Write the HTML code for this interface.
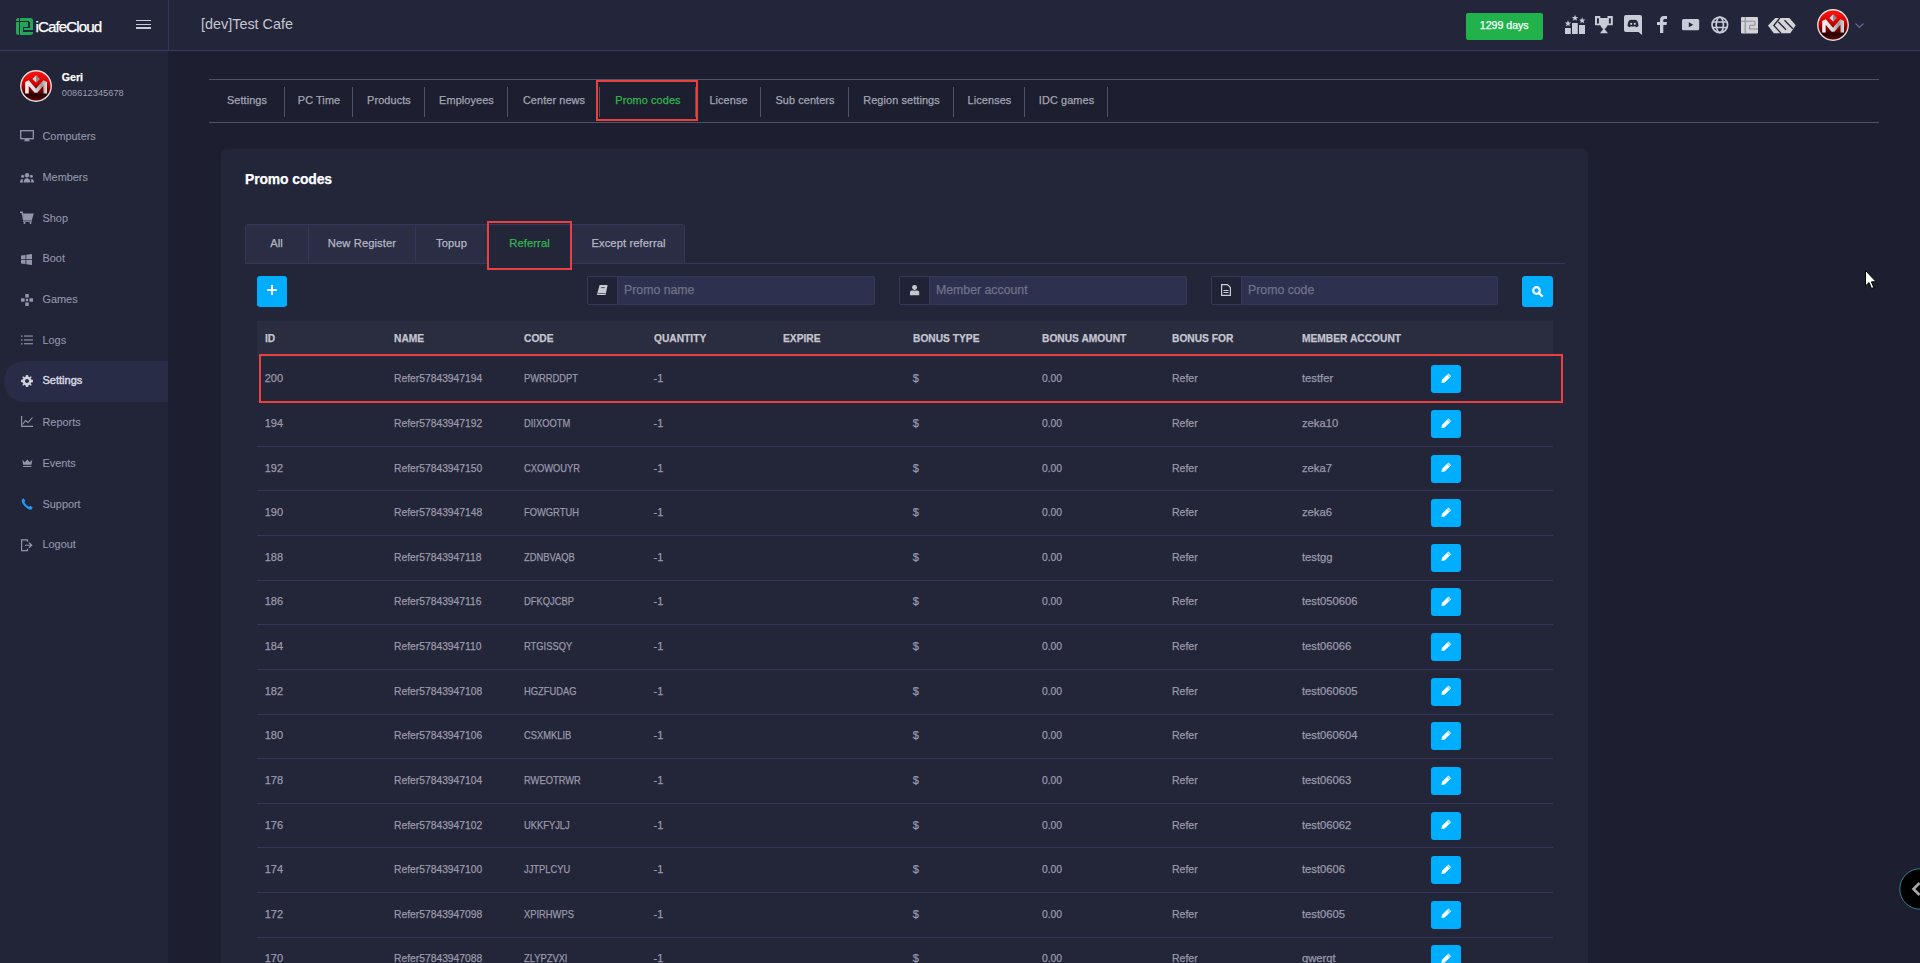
<!DOCTYPE html><html><head><meta charset="utf-8"><style>
html,body{margin:0;padding:0;width:1920px;height:963px;overflow:hidden;background:#1d1e2f;font-family:"Liberation Sans", sans-serif;}
.t{position:absolute;white-space:nowrap;line-height:1;-webkit-text-stroke:0.25px currentColor;}
.r{position:absolute;}
svg{position:absolute;overflow:visible;}
</style></head><body>
<div class="r" style="left:0px;top:0px;width:168px;height:963px;background:#222538;"></div>
<div class="r" style="left:0px;top:0px;width:1920px;height:50px;background:#23253a;"></div>
<div class="r" style="left:0px;top:50px;width:1920px;height:1px;background:#3a3a62;"></div>
<div class="r" style="left:168px;top:0px;width:1px;height:50px;background:#33345a;"></div>
<div class="r" style="left:16px;top:18px;width:17px;height:17px;background:#1fa855;border-radius:2.5px;"></div>
<div class="r" style="left:18.7px;top:18px;width:1.1px;height:17px;background:#23253a;"></div>
<div class="r" style="left:16px;top:21.3px;width:2.7px;height:1.2px;background:#23253a;"></div>
<div class="r" style="left:19.8px;top:21.4px;width:9.5px;height:1.0px;background:#23253a;"></div>
<div class="r" style="left:28.3px;top:22px;width:1.6px;height:5.2px;background:#23253a;"></div>
<div class="r" style="left:23.2px;top:27px;width:6.7px;height:1.1px;background:#23253a;"></div>
<div class="r" style="left:22.9px;top:27px;width:1.2px;height:4.4px;background:#23253a;"></div>
<div class="r" style="left:22.9px;top:30.3px;width:10.1px;height:1.4px;background:#23253a;"></div>
<div class="t" style="left:35.5px;top:19.13px;font-size:15.2px;color:#ffffff;font-weight:400;letter-spacing:-0.95px;">iCafeCloud</div>
<div class="r" style="left:136.3px;top:19.8px;width:14.6px;height:1.5px;background:#c9cbd3;"></div>
<div class="r" style="left:136.3px;top:23.5px;width:14.6px;height:1.5px;background:#c9cbd3;"></div>
<div class="r" style="left:136.3px;top:27.3px;width:14.6px;height:1.5px;background:#c9cbd3;"></div>
<div class="t" style="left:201px;top:17.01px;font-size:14.4px;color:#c6c7d0;font-weight:400;-webkit-text-stroke:0;">[dev]Test Cafe</div>
<div class="r" style="left:1466px;top:13px;width:77px;height:27px;background:#22b24c;border-radius:2px;"></div>
<div class="t" style="left:1304.2px;width:400px;text-align:center;top:20.03px;font-size:10.6px;color:#ffffff;font-weight:400;">1299 days</div>
<svg style="left:1565px;top:15px" width="20" height="19" viewBox="0 0 20 19">
<rect x="0" y="13" width="5.8" height="6" fill="#c8cbd8"/><rect x="7" y="8" width="5.8" height="11" fill="#c8cbd8"/><rect x="14" y="10" width="6" height="9" fill="#c8cbd8"/>
<path d="M3.00 5.30 L3.87 7.40 L6.14 7.58 L4.41 9.06 L4.94 11.27 L3.00 10.08 L1.06 11.27 L1.59 9.06 L-0.14 7.58 L2.13 7.40Z M10.00 -0.20 L10.87 1.90 L13.14 2.08 L11.41 3.56 L11.94 5.77 L10.00 4.58 L8.06 5.77 L8.59 3.56 L6.86 2.08 L9.13 1.90Z M17.20 2.30 L18.07 4.40 L20.34 4.58 L18.61 6.06 L19.14 8.27 L17.20 7.08 L15.26 8.27 L15.79 6.06 L14.06 4.58 L16.33 4.40Z" fill="#c8cbd8"/></svg>
<svg style="left:1595.2px;top:15.8px" width="18" height="17.4" viewBox="0 0 18 17.4">
<path d="M0 0 H5.3 V2.1 H12.5 V0 H17.8 V8.4 Q17.8 9.3 16.9 9.3 H12.6 Q11.5 12 9.5 13.1 L13 17.2 H5 L8.3 13.1 Q6.3 12 5.2 9.3 H0.9 Q0 9.3 0 8.4Z M2 2.2 V7.6 H3.9 V2.2Z M13.9 2.2 V7.6 H15.8 V2.2Z" fill="#c8cbd8" fill-rule="evenodd"/></svg>
<svg style="left:1624px;top:15px" width="18" height="20" viewBox="0 0 18 20">
<path d="M2 0 H16 Q18 0 18 2 V20 L14.5 17 H2 Q0 17 0 15 V2 Q0 0 2 0Z" fill="#c8cbd8"/>
<path d="M5 5.5 Q7 4.5 9 5 Q11 4.5 13 5.5 Q14.5 8 14.5 11 Q13.5 12 12 12.3 L11.3 11.2 Q9 11.8 6.7 11.2 L6 12.3 Q4.5 12 3.5 11 Q3.5 8 5 5.5Z" fill="#23253a"/>
<circle cx="7.2" cy="8.8" r="1.1" fill="#c8cbd8"/><circle cx="10.8" cy="8.8" r="1.1" fill="#c8cbd8"/></svg>
<svg style="left:1657px;top:16px" width="10" height="17" viewBox="0 0 10 17">
<path d="M3 17 V9 H0 V6 H3 V4 Q3 0 7 0 H10 V3 H7.5 Q6.3 3 6.3 4.2 V6 H10 L9.5 9 H6.3 V17Z" fill="#c8cbd8"/></svg>
<svg style="left:1682.4px;top:18.7px" width="17.2" height="11.3" viewBox="0 0 17.2 11.3">
<rect x="0" y="0" width="17.2" height="11.3" rx="1.6" fill="#c8cbd8"/><path d="M6.8 3.3 L11.3 5.75 L6.8 8.2Z" fill="#23253a"/></svg>
<svg style="left:1711px;top:15.5px" width="18" height="18" viewBox="0 0 18 18">
<g fill="none" stroke="#c8cbd8" stroke-width="1.7"><circle cx="8.8" cy="8.85" r="7.8"/><ellipse cx="8.8" cy="8.85" rx="3.6" ry="7.8"/><path d="M1.5 6 H16.1 M1.5 11.5 H16.1"/></g></svg>
<svg style="left:1740.5px;top:16.5px" width="17" height="16.5" viewBox="0 0 17 16.5">
<rect x="0" y="0" width="17" height="16.5" rx="1.2" fill="#d4d4d8"/>
<g fill="none" stroke="#8a8c98" stroke-width="1.1"><path d="M4.2 0 V16.5 M0 4.3 H13.2 Q14 4.3 14 5.3 V7.2 Q14 8.2 13 8.2 H9.5 Q8.6 8.2 8.6 9.2 V12 H17"/></g></svg>
<svg style="left:1768px;top:17.8px" width="28" height="15.4" viewBox="0 0 28 15.4">
<path d="M7.3 0 H21.4 L27.7 7.2 L22.3 15.2 H5.8 L0 7.6Z" fill="#d4d4d8"/>
<g fill="none" stroke="#23253a" stroke-width="1.3"><path d="M11.8 0 L5.8 7.5 L13.2 15.4 M10.2 3.8 L18 11.7 M16.5 2.2 L24.8 10.7"/></g></svg>
<svg style="left:1817px;top:9px" width="32" height="32" viewBox="0 0 32 32">
<defs><linearGradient id="lg1817" x1="0" y1="0" x2="0" y2="1"><stop offset="0" stop-color="#ff1414"/><stop offset="0.4" stop-color="#d80000"/><stop offset="0.65" stop-color="#7a0000"/><stop offset="0.8" stop-color="#240000"/><stop offset="1" stop-color="#6a0606"/></linearGradient>
<linearGradient id="mg1817" x1="0" y1="0" x2="1" y2="0"><stop offset="0" stop-color="#f4f4f4"/><stop offset="0.5" stop-color="#d8d8d8"/><stop offset="0.75" stop-color="#9a9a9a"/><stop offset="1" stop-color="#e0e0e0"/></linearGradient></defs>
<circle cx="16" cy="16" r="15.2" fill="url(#lg1817)" stroke="#e6dede" stroke-width="1.4"/>
<path d="M5.2 23.5 L5.2 12 L8.8 10.3 L16 18.8 L23.2 10.3 L27 12 L27 23.5 L23.5 23.5 L23.4 15.8 L17.4 22.8 L14.6 22.8 L8.7 15.8 L8.7 23.5Z" fill="url(#mg1817)"/>
<path d="M16 5.3 L19.6 8.9 L16 12.6 L12.4 8.9Z" fill="#d4d4d4"/><path d="M16 5.3 L19.6 8.9 L16 12.6Z" fill="#8c8c8c"/></svg>
<svg style="left:1855px;top:22.5px" width="9" height="5" viewBox="0 0 9 5"><path d="M0.5 0.5 L4.5 4.3 L8.5 0.5" fill="none" stroke="#5e6b95" stroke-width="1.2"/></svg>
<svg style="left:20px;top:70px" width="32" height="32" viewBox="0 0 32 32">
<defs><linearGradient id="lg20" x1="0" y1="0" x2="0" y2="1"><stop offset="0" stop-color="#ff1414"/><stop offset="0.4" stop-color="#d80000"/><stop offset="0.65" stop-color="#7a0000"/><stop offset="0.8" stop-color="#240000"/><stop offset="1" stop-color="#6a0606"/></linearGradient>
<linearGradient id="mg20" x1="0" y1="0" x2="1" y2="0"><stop offset="0" stop-color="#f4f4f4"/><stop offset="0.5" stop-color="#d8d8d8"/><stop offset="0.75" stop-color="#9a9a9a"/><stop offset="1" stop-color="#e0e0e0"/></linearGradient></defs>
<circle cx="16" cy="16" r="15.2" fill="url(#lg20)" stroke="#e6dede" stroke-width="1.4"/>
<path d="M5.2 23.5 L5.2 12 L8.8 10.3 L16 18.8 L23.2 10.3 L27 12 L27 23.5 L23.5 23.5 L23.4 15.8 L17.4 22.8 L14.6 22.8 L8.7 15.8 L8.7 23.5Z" fill="url(#mg20)"/>
<path d="M16 5.3 L19.6 8.9 L16 12.6 L12.4 8.9Z" fill="#d4d4d4"/><path d="M16 5.3 L19.6 8.9 L16 12.6Z" fill="#8c8c8c"/></svg>
<div class="t" style="left:61.8px;top:71.83px;font-size:10.6px;color:#ffffff;font-weight:700;">Geri</div>
<div class="t" style="left:61.8px;top:89.21px;font-size:9.2px;color:#9a9fb2;font-weight:400;letter-spacing:0.05px;-webkit-text-stroke:0;">008612345678</div>
<div class="r" style="left:4px;top:361px;width:164px;height:41px;background:#292c47;border-radius:20px 0 0 20px;"></div>
<div class="t" style="left:42.5px;top:130.57px;font-size:10.9px;color:#9297ad;font-weight:400;-webkit-text-stroke:0.1px currentColor;">Computers</div>
<div class="t" style="left:42.5px;top:171.57px;font-size:10.9px;color:#9297ad;font-weight:400;-webkit-text-stroke:0.1px currentColor;">Members</div>
<div class="t" style="left:42.5px;top:212.57px;font-size:10.9px;color:#9297ad;font-weight:400;-webkit-text-stroke:0.1px currentColor;">Shop</div>
<div class="t" style="left:42.5px;top:253.37px;font-size:10.9px;color:#9297ad;font-weight:400;-webkit-text-stroke:0.1px currentColor;">Boot</div>
<div class="t" style="left:42.5px;top:294.27px;font-size:10.9px;color:#9297ad;font-weight:400;-webkit-text-stroke:0.1px currentColor;">Games</div>
<div class="t" style="left:42.5px;top:335.27px;font-size:10.9px;color:#9297ad;font-weight:400;-webkit-text-stroke:0.1px currentColor;">Logs</div>
<div class="t" style="left:42.5px;top:375.09px;font-size:11px;color:#d4d6e0;font-weight:400;-webkit-text-stroke:0.45px currentColor;">Settings</div>
<div class="t" style="left:42.5px;top:416.77px;font-size:10.9px;color:#9297ad;font-weight:400;-webkit-text-stroke:0.1px currentColor;">Reports</div>
<div class="t" style="left:42.5px;top:457.57px;font-size:10.9px;color:#9297ad;font-weight:400;-webkit-text-stroke:0.1px currentColor;">Events</div>
<div class="t" style="left:42.5px;top:498.57px;font-size:10.9px;color:#9297ad;font-weight:400;-webkit-text-stroke:0.1px currentColor;">Support</div>
<div class="t" style="left:42.5px;top:539.37px;font-size:10.9px;color:#9297ad;font-weight:400;-webkit-text-stroke:0.1px currentColor;">Logout</div>
<svg style="left:20px;top:130px" width="14" height="12" viewBox="0 0 14 12"><rect x="0.7" y="0.7" width="12.6" height="8" fill="none" stroke="#9297ad" stroke-width="1.3"/><path d="M5 9 H9 L9.8 11.2 H4.2Z" fill="#9297ad"/></svg>\n<svg style="left:20px;top:172.5px" width="14" height="9.5" viewBox="0 0 14 9.5"><circle cx="7" cy="2.3" r="2.2" fill="#9297ad"/><circle cx="2.6" cy="3.3" r="1.5" fill="#9297ad"/><circle cx="11.4" cy="3.3" r="1.5" fill="#9297ad"/><path d="M3.5 9.5 Q3.8 5.5 7 5.3 Q10.2 5.5 10.5 9.5Z M0 9.5 Q0 6.3 2.6 6 Q3 6.5 2.8 9.5Z M14 9.5 Q14 6.3 11.4 6 Q11 6.5 11.2 9.5Z" fill="#9297ad"/></svg>\n<svg style="left:20px;top:212px" width="13" height="12" viewBox="0 0 13 12"><path d="M0 0.3 H2.2 L3.6 7.5 H11.3 L12.8 2.3 H3.3" fill="none" stroke="#9297ad" stroke-width="1.4"/><path d="M3.3 2.3 H12.8 L11.3 7.5 H3.6Z" fill="#9297ad"/><rect x="3" y="8.6" width="9" height="1.2" fill="#9297ad"/><circle cx="4.5" cy="11" r="1" fill="#9297ad"/><circle cx="10.5" cy="11" r="1" fill="#9297ad"/></svg>\n<svg style="left:21px;top:254px" width="11" height="11" viewBox="0 0 11 11"><path d="M0 1.6 L4.5 0.9 V5 H0Z M5.3 0.8 L11 0 V5 H5.3Z M0 5.8 H4.5 V10 L0 9.4Z M5.3 5.8 H11 V11 L5.3 10.2Z" fill="#9297ad"/></svg>\n<svg style="left:21px;top:294px" width="12" height="12" viewBox="0 0 12 12"><rect x="4.3" y="0" width="3.4" height="3.6" fill="#9297ad"/><rect x="4.3" y="8.4" width="3.4" height="3.6" fill="#9297ad"/><rect x="0" y="4.3" width="3.6" height="3.4" fill="#9297ad"/><rect x="8.4" y="4.3" width="3.6" height="3.4" fill="#9297ad"/><rect x="4.8" y="4.8" width="2.4" height="2.4" fill="#9297ad"/></svg>\n<svg style="left:21px;top:335px" width="12" height="10" viewBox="0 0 12 10"><g fill="#9297ad"><rect x="0" y="0.5" width="1.5" height="1.3"/><rect x="3" y="0.5" width="9" height="1.1"/><rect x="0" y="4.4" width="1.5" height="1.3"/><rect x="3" y="4.4" width="9" height="1.1"/><rect x="0" y="8.2" width="1.5" height="1.3"/><rect x="3" y="8.2" width="9" height="1.1"/></g></svg>\n<svg style="left:20.5px;top:375px" width="12" height="12" viewBox="0 0 12 12"><path d="M6 0 L7.2 0.2 L7.5 1.8 L8.6 2.3 L9.9 1.3 L10.7 2.1 L9.7 3.4 L10.2 4.5 L11.8 4.8 L12 6 L11.8 7.2 L10.2 7.5 L9.7 8.6 L10.7 9.9 L9.9 10.7 L8.6 9.7 L7.5 10.2 L7.2 11.8 L6 12 L4.8 11.8 L4.5 10.2 L3.4 9.7 L2.1 10.7 L1.3 9.9 L2.3 8.6 L1.8 7.5 L0.2 7.2 L0 6 L0.2 4.8 L1.8 4.5 L2.3 3.4 L1.3 2.1 L2.1 1.3 L3.4 2.3 L4.5 1.8 L4.8 0.2Z M6 4 A2 2 0 1 0 6.01 4Z" fill="#cfd1dd" fill-rule="evenodd"/></svg>\n<svg style="left:21px;top:416.3px" width="12" height="11" viewBox="0 0 12 11"><path d="M0.6 0 V10.4 H12" fill="none" stroke="#9297ad" stroke-width="1.1"/><path d="M1.5 8.5 L4.5 4.5 L7 6.5 L11.5 1.5" fill="none" stroke="#9297ad" stroke-width="1.1"/></svg>\n<svg style="left:21.8px;top:459px" width="10.6" height="8.3" viewBox="0 0 12 10"><path d="M0 1 L3 4 L6 0.5 L9 4 L12 1 L11 7 H1Z" fill="#9297ad"/><rect x="1" y="8.3" width="10" height="1.3" fill="#9297ad"/></svg>\n<svg style="left:21px;top:497.6px" width="12" height="12" viewBox="0 0 12 12"><path d="M2.5 0.3 L4.3 2.8 L3.3 4.3 Q4.5 6.8 7.7 8.7 L9.2 7.7 L11.7 9.5 L10.5 11.5 Q8 12.2 4.5 9 Q0.6 5.3 0.6 2 Z" fill="#19a0f5"/></svg>\n<svg style="left:21px;top:538.5px" width="12" height="12.5" viewBox="0 0 12 12"><path d="M6.5 2.5 V0.6 H0.6 V11.4 H6.5 V9.5" fill="none" stroke="#9297ad" stroke-width="1.2"/><path d="M4 6 H10.5 M8 3.5 L10.7 6 L8 8.5" fill="none" stroke="#9297ad" stroke-width="1.2"/></svg>\n<div class="r" style="left:209px;top:79px;width:1670px;height:1px;background:#505366;"></div>
<div class="r" style="left:209px;top:122px;width:1670px;height:1px;background:#505366;"></div>
<div class="r" style="left:284px;top:87px;width:1px;height:30px;background:#505366;"></div>
<div class="t" style="left:47.0px;width:400px;text-align:center;top:95.27px;font-size:10.9px;color:#a2a5b4;font-weight:400;letter-spacing:0.1px;">Settings</div>
<div class="r" style="left:352px;top:87px;width:1px;height:30px;background:#505366;"></div>
<div class="t" style="left:119.0px;width:400px;text-align:center;top:95.27px;font-size:10.9px;color:#a2a5b4;font-weight:400;letter-spacing:0.1px;">PC Time</div>
<div class="r" style="left:424px;top:87px;width:1px;height:30px;background:#505366;"></div>
<div class="t" style="left:189.0px;width:400px;text-align:center;top:95.27px;font-size:10.9px;color:#a2a5b4;font-weight:400;letter-spacing:0.1px;">Products</div>
<div class="r" style="left:507px;top:87px;width:1px;height:30px;background:#505366;"></div>
<div class="t" style="left:266.5px;width:400px;text-align:center;top:95.27px;font-size:10.9px;color:#a2a5b4;font-weight:400;letter-spacing:0.1px;">Employees</div>
<div class="r" style="left:599px;top:87px;width:1px;height:30px;background:#505366;"></div>
<div class="t" style="left:354.0px;width:400px;text-align:center;top:95.27px;font-size:10.9px;color:#a2a5b4;font-weight:400;letter-spacing:0.1px;">Center news</div>
<div class="r" style="left:695px;top:87px;width:1px;height:30px;background:#505366;"></div>
<div class="t" style="left:448.0px;width:400px;text-align:center;top:95.27px;font-size:10.9px;color:#2fb64e;font-weight:400;letter-spacing:0.1px;">Promo codes</div>
<div class="r" style="left:760px;top:87px;width:1px;height:30px;background:#505366;"></div>
<div class="t" style="left:528.5px;width:400px;text-align:center;top:95.27px;font-size:10.9px;color:#a2a5b4;font-weight:400;letter-spacing:0.1px;">License</div>
<div class="r" style="left:848px;top:87px;width:1px;height:30px;background:#505366;"></div>
<div class="t" style="left:605.0px;width:400px;text-align:center;top:95.27px;font-size:10.9px;color:#a2a5b4;font-weight:400;letter-spacing:0.1px;">Sub centers</div>
<div class="r" style="left:953px;top:87px;width:1px;height:30px;background:#505366;"></div>
<div class="t" style="left:701.5px;width:400px;text-align:center;top:95.27px;font-size:10.9px;color:#a2a5b4;font-weight:400;letter-spacing:0.1px;">Region settings</div>
<div class="r" style="left:1024px;top:87px;width:1px;height:30px;background:#505366;"></div>
<div class="t" style="left:789.5px;width:400px;text-align:center;top:95.27px;font-size:10.9px;color:#a2a5b4;font-weight:400;letter-spacing:0.1px;">Licenses</div>
<div class="r" style="left:1107px;top:87px;width:1px;height:30px;background:#505366;"></div>
<div class="t" style="left:866.5px;width:400px;text-align:center;top:95.27px;font-size:10.9px;color:#a2a5b4;font-weight:400;letter-spacing:0.1px;">IDC games</div>
<div class="r" style="left:596px;top:80px;width:102px;height:41px;background:transparent;box-sizing:border-box;border:2px solid #e8413f;"></div>
<div class="r" style="left:221px;top:149px;width:1367px;height:900px;background:#232539;border-radius:5px;"></div>
<div class="t" style="left:245px;top:173.23px;font-size:13.9px;color:#ffffff;font-weight:700;letter-spacing:-0.1px;">Promo codes</div>
<div class="r" style="left:685px;top:263px;width:880px;height:1px;background:#34375a;"></div>
<div class="r" style="left:245px;top:224px;width:440px;height:40px;background:#2a2d43;box-sizing:border-box;border:1px solid #34375a;border-radius:3px 3px 0 0;"></div>
<div class="r" style="left:308px;top:224px;width:1px;height:40px;background:#34375a;"></div>
<div class="r" style="left:415px;top:224px;width:1px;height:40px;background:#34375a;"></div>
<div class="r" style="left:487px;top:224px;width:1px;height:40px;background:#34375a;"></div>
<div class="r" style="left:571px;top:224px;width:1px;height:40px;background:#34375a;"></div>
<div class="r" style="left:488px;top:225px;width:83px;height:39px;background:#232539;"></div>
<div class="t" style="left:76.5px;width:400px;text-align:center;top:238.02px;font-size:11.2px;color:#b5b7c3;font-weight:400;letter-spacing:0.1px;">All</div>
<div class="t" style="left:162.0px;width:400px;text-align:center;top:238.02px;font-size:11.2px;color:#b5b7c3;font-weight:400;letter-spacing:0.1px;">New Register</div>
<div class="t" style="left:251.5px;width:400px;text-align:center;top:238.02px;font-size:11.2px;color:#b5b7c3;font-weight:400;letter-spacing:0.1px;">Topup</div>
<div class="t" style="left:329.5px;width:400px;text-align:center;top:238.02px;font-size:11.2px;color:#2fb64e;font-weight:400;letter-spacing:0.1px;">Referral</div>
<div class="t" style="left:428.5px;width:400px;text-align:center;top:238.02px;font-size:11.2px;color:#b5b7c3;font-weight:400;letter-spacing:0.1px;">Except referral</div>
<div class="r" style="left:487px;top:221px;width:85px;height:49px;background:transparent;box-sizing:border-box;border:2px solid #e8413f;"></div>
<div class="r" style="left:257px;top:276px;width:30px;height:31px;background:#00aeff;border-radius:3px;"></div>
<div class="r" style="left:267px;top:289.3px;width:10px;height:1.7px;background:#ffffff;"></div>
<div class="r" style="left:271.15px;top:285px;width:1.7px;height:10px;background:#ffffff;"></div>
<div class="r" style="left:587px;top:276px;width:288px;height:29px;background:#2e3050;box-sizing:border-box;border:1px solid #34375a;border-radius:2px;"></div>
<div class="r" style="left:587px;top:276px;width:31px;height:29px;background:#202236;box-sizing:border-box;border:1px solid #34375a;border-radius:2px 0 0 2px;"></div>
<div class="t" style="left:624px;top:284.09px;font-size:12.3px;color:#6f7186;font-weight:400;">Promo name</div>
<svg style="left:597.3px;top:285px" width="11" height="10" viewBox="0 0 11 10"><path d="M2.6 0 H10.6 L8.6 10 H0.6 Q-0.2 10 0.1 9 Z" fill="#c9cbd3"/><rect x="4.2" y="2.2" width="3.6" height="0.9" fill="#3a3c50"/><path d="M1 8.3 H8.6 L8.45 9 H0.85Z" fill="#3a3c50"/></svg>
<div class="r" style="left:899px;top:276px;width:288px;height:29px;background:#2e3050;box-sizing:border-box;border:1px solid #34375a;border-radius:2px;"></div>
<div class="r" style="left:899px;top:276px;width:31px;height:29px;background:#202236;box-sizing:border-box;border:1px solid #34375a;border-radius:2px 0 0 2px;"></div>
<div class="t" style="left:936px;top:284.09px;font-size:12.3px;color:#6f7186;font-weight:400;">Member account</div>
<svg style="left:909.8px;top:284.8px" width="9.2" height="10.2" viewBox="0 0 9.2 10.2"><circle cx="4.6" cy="2.5" r="2.5" fill="#c4c6ce"/><path d="M0 10.2 V7 Q0 5.4 1.6 5.4 H7.6 Q9.2 5.4 9.2 7 V10.2Z" fill="#c4c6ce"/></svg>
<div class="r" style="left:1211px;top:276px;width:287px;height:29px;background:#2e3050;box-sizing:border-box;border:1px solid #34375a;border-radius:2px;"></div>
<div class="r" style="left:1211px;top:276px;width:31px;height:29px;background:#202236;box-sizing:border-box;border:1px solid #34375a;border-radius:2px 0 0 2px;"></div>
<div class="t" style="left:1248px;top:284.09px;font-size:12.3px;color:#6f7186;font-weight:400;">Promo code</div>
<svg style="left:1221px;top:283.5px" width="10" height="12" viewBox="0 0 10 12"><path d="M0.6 0.6 H6.5 L9.4 3.5 V11.4 H0.6Z" fill="none" stroke="#c9cbd3" stroke-width="1.2"/><rect x="2.5" y="6" width="5" height="1" fill="#c9cbd3"/><rect x="2.5" y="8" width="5" height="1" fill="#c9cbd3"/></svg>
<div class="r" style="left:1522px;top:276px;width:31px;height:31px;background:#00aeff;border-radius:3px;"></div>
<svg style="left:1532px;top:286px" width="11" height="11" viewBox="0 0 11 11"><circle cx="4.5" cy="4.5" r="3.3" fill="none" stroke="#fff" stroke-width="2.2"/><path d="M6.8 6.8 L10 10" stroke="#fff" stroke-width="2.4" stroke-linecap="round"/></svg>
<div class="r" style="left:257px;top:321px;width:1296px;height:36px;background:#2a2c40;"></div>
<div class="t" style="left:264.7px;top:333.49px;font-size:11px;color:#c4c5ce;font-weight:700;transform:scaleX(0.93);transform-origin:0 0;">ID</div>
<div class="t" style="left:394.29999999999995px;top:333.49px;font-size:11px;color:#c4c5ce;font-weight:700;transform:scaleX(0.93);transform-origin:0 0;">NAME</div>
<div class="t" style="left:523.9px;top:333.49px;font-size:11px;color:#c4c5ce;font-weight:700;transform:scaleX(0.93);transform-origin:0 0;">CODE</div>
<div class="t" style="left:653.5px;top:333.49px;font-size:11px;color:#c4c5ce;font-weight:700;transform:scaleX(0.93);transform-origin:0 0;">QUANTITY</div>
<div class="t" style="left:783.0999999999999px;top:333.49px;font-size:11px;color:#c4c5ce;font-weight:700;transform:scaleX(0.93);transform-origin:0 0;">EXPIRE</div>
<div class="t" style="left:912.7px;top:333.49px;font-size:11px;color:#c4c5ce;font-weight:700;transform:scaleX(0.93);transform-origin:0 0;">BONUS TYPE</div>
<div class="t" style="left:1042.3px;top:333.49px;font-size:11px;color:#c4c5ce;font-weight:700;transform:scaleX(0.93);transform-origin:0 0;">BONUS AMOUNT</div>
<div class="t" style="left:1171.8999999999999px;top:333.49px;font-size:11px;color:#c4c5ce;font-weight:700;transform:scaleX(0.93);transform-origin:0 0;">BONUS FOR</div>
<div class="t" style="left:1301.5px;top:333.49px;font-size:11px;color:#c4c5ce;font-weight:700;transform:scaleX(0.93);transform-origin:0 0;">MEMBER ACCOUNT</div>
<div class="t" style="left:264.7px;top:373.29px;font-size:11px;color:#9a99aa;font-weight:400;transform:scaleX(1.0);transform-origin:0 0;">200</div>
<div class="t" style="left:394.29999999999995px;top:373.29px;font-size:11px;color:#9a99aa;font-weight:400;transform:scaleX(0.937);transform-origin:0 0;">Refer57843947194</div>
<div class="t" style="left:523.9px;top:373.29px;font-size:11px;color:#9a99aa;font-weight:400;transform:scaleX(0.85);transform-origin:0 0;">PWRRDDPT</div>
<div class="t" style="left:653.5px;top:373.29px;font-size:11px;color:#9a99aa;font-weight:400;transform:scaleX(1.0);transform-origin:0 0;">-1</div>
<div class="t" style="left:912.7px;top:373.29px;font-size:11px;color:#9a99aa;font-weight:400;transform:scaleX(1.0);transform-origin:0 0;">$</div>
<div class="t" style="left:1042.3px;top:373.29px;font-size:11px;color:#9a99aa;font-weight:400;transform:scaleX(0.94);transform-origin:0 0;">0.00</div>
<div class="t" style="left:1171.8999999999999px;top:373.29px;font-size:11px;color:#9a99aa;font-weight:400;transform:scaleX(0.955);transform-origin:0 0;">Refer</div>
<div class="t" style="left:1301.5px;top:373.29px;font-size:11px;color:#9a99aa;font-weight:400;transform:scaleX(1.02);transform-origin:0 0;">testfer</div>
<div class="r" style="left:1431px;top:365.3px;width:30px;height:28px;background:#00aeff;border-radius:3px;"></div>
<svg style="left:1441px;top:372.90000000000003px" width="10.5" height="10.5" viewBox="0 0 10 10"><path d="M7 0.4 L9.6 3 L3.6 9 L0.4 9.6 L1 6.4Z" fill="#fff"/><path d="M5.9 1.5 L8.5 4.1" stroke="#00aeff" stroke-width="0.8"/></svg>
<div class="r" style="left:257px;top:401.12px;width:1296px;height:1px;background:#34355a;"></div>
<div class="t" style="left:264.7px;top:417.92px;font-size:11px;color:#9a99aa;font-weight:400;transform:scaleX(1.0);transform-origin:0 0;">194</div>
<div class="t" style="left:394.29999999999995px;top:417.92px;font-size:11px;color:#9a99aa;font-weight:400;transform:scaleX(0.937);transform-origin:0 0;">Refer57843947192</div>
<div class="t" style="left:523.9px;top:417.92px;font-size:11px;color:#9a99aa;font-weight:400;transform:scaleX(0.85);transform-origin:0 0;">DIIXOOTM</div>
<div class="t" style="left:653.5px;top:417.92px;font-size:11px;color:#9a99aa;font-weight:400;transform:scaleX(1.0);transform-origin:0 0;">-1</div>
<div class="t" style="left:912.7px;top:417.92px;font-size:11px;color:#9a99aa;font-weight:400;transform:scaleX(1.0);transform-origin:0 0;">$</div>
<div class="t" style="left:1042.3px;top:417.92px;font-size:11px;color:#9a99aa;font-weight:400;transform:scaleX(0.94);transform-origin:0 0;">0.00</div>
<div class="t" style="left:1171.8999999999999px;top:417.92px;font-size:11px;color:#9a99aa;font-weight:400;transform:scaleX(0.955);transform-origin:0 0;">Refer</div>
<div class="t" style="left:1301.5px;top:417.92px;font-size:11px;color:#9a99aa;font-weight:400;transform:scaleX(1.02);transform-origin:0 0;">zeka10</div>
<div class="r" style="left:1431px;top:409.93px;width:30px;height:28px;background:#00aeff;border-radius:3px;"></div>
<svg style="left:1441px;top:417.53000000000003px" width="10.5" height="10.5" viewBox="0 0 10 10"><path d="M7 0.4 L9.6 3 L3.6 9 L0.4 9.6 L1 6.4Z" fill="#fff"/><path d="M5.9 1.5 L8.5 4.1" stroke="#00aeff" stroke-width="0.8"/></svg>
<div class="r" style="left:257px;top:445.75px;width:1296px;height:1px;background:#34355a;"></div>
<div class="t" style="left:264.7px;top:462.54px;font-size:11px;color:#9a99aa;font-weight:400;transform:scaleX(1.0);transform-origin:0 0;">192</div>
<div class="t" style="left:394.29999999999995px;top:462.54px;font-size:11px;color:#9a99aa;font-weight:400;transform:scaleX(0.937);transform-origin:0 0;">Refer57843947150</div>
<div class="t" style="left:523.9px;top:462.54px;font-size:11px;color:#9a99aa;font-weight:400;transform:scaleX(0.85);transform-origin:0 0;">CXOWOUYR</div>
<div class="t" style="left:653.5px;top:462.54px;font-size:11px;color:#9a99aa;font-weight:400;transform:scaleX(1.0);transform-origin:0 0;">-1</div>
<div class="t" style="left:912.7px;top:462.54px;font-size:11px;color:#9a99aa;font-weight:400;transform:scaleX(1.0);transform-origin:0 0;">$</div>
<div class="t" style="left:1042.3px;top:462.54px;font-size:11px;color:#9a99aa;font-weight:400;transform:scaleX(0.94);transform-origin:0 0;">0.00</div>
<div class="t" style="left:1171.8999999999999px;top:462.54px;font-size:11px;color:#9a99aa;font-weight:400;transform:scaleX(0.955);transform-origin:0 0;">Refer</div>
<div class="t" style="left:1301.5px;top:462.54px;font-size:11px;color:#9a99aa;font-weight:400;transform:scaleX(1.02);transform-origin:0 0;">zeka7</div>
<div class="r" style="left:1431px;top:454.55px;width:30px;height:28px;background:#00aeff;border-radius:3px;"></div>
<svg style="left:1441px;top:462.15000000000003px" width="10.5" height="10.5" viewBox="0 0 10 10"><path d="M7 0.4 L9.6 3 L3.6 9 L0.4 9.6 L1 6.4Z" fill="#fff"/><path d="M5.9 1.5 L8.5 4.1" stroke="#00aeff" stroke-width="0.8"/></svg>
<div class="r" style="left:257px;top:490.38px;width:1296px;height:1px;background:#34355a;"></div>
<div class="t" style="left:264.7px;top:507.17px;font-size:11px;color:#9a99aa;font-weight:400;transform:scaleX(1.0);transform-origin:0 0;">190</div>
<div class="t" style="left:394.29999999999995px;top:507.17px;font-size:11px;color:#9a99aa;font-weight:400;transform:scaleX(0.937);transform-origin:0 0;">Refer57843947148</div>
<div class="t" style="left:523.9px;top:507.17px;font-size:11px;color:#9a99aa;font-weight:400;transform:scaleX(0.85);transform-origin:0 0;">FOWGRTUH</div>
<div class="t" style="left:653.5px;top:507.17px;font-size:11px;color:#9a99aa;font-weight:400;transform:scaleX(1.0);transform-origin:0 0;">-1</div>
<div class="t" style="left:912.7px;top:507.17px;font-size:11px;color:#9a99aa;font-weight:400;transform:scaleX(1.0);transform-origin:0 0;">$</div>
<div class="t" style="left:1042.3px;top:507.17px;font-size:11px;color:#9a99aa;font-weight:400;transform:scaleX(0.94);transform-origin:0 0;">0.00</div>
<div class="t" style="left:1171.8999999999999px;top:507.17px;font-size:11px;color:#9a99aa;font-weight:400;transform:scaleX(0.955);transform-origin:0 0;">Refer</div>
<div class="t" style="left:1301.5px;top:507.17px;font-size:11px;color:#9a99aa;font-weight:400;transform:scaleX(1.02);transform-origin:0 0;">zeka6</div>
<div class="r" style="left:1431px;top:499.18px;width:30px;height:28px;background:#00aeff;border-radius:3px;"></div>
<svg style="left:1441px;top:506.78000000000003px" width="10.5" height="10.5" viewBox="0 0 10 10"><path d="M7 0.4 L9.6 3 L3.6 9 L0.4 9.6 L1 6.4Z" fill="#fff"/><path d="M5.9 1.5 L8.5 4.1" stroke="#00aeff" stroke-width="0.8"/></svg>
<div class="r" style="left:257px;top:535.0px;width:1296px;height:1px;background:#34355a;"></div>
<div class="t" style="left:264.7px;top:551.79px;font-size:11px;color:#9a99aa;font-weight:400;transform:scaleX(1.0);transform-origin:0 0;">188</div>
<div class="t" style="left:394.29999999999995px;top:551.79px;font-size:11px;color:#9a99aa;font-weight:400;transform:scaleX(0.937);transform-origin:0 0;">Refer57843947118</div>
<div class="t" style="left:523.9px;top:551.79px;font-size:11px;color:#9a99aa;font-weight:400;transform:scaleX(0.85);transform-origin:0 0;">ZDNBVAQB</div>
<div class="t" style="left:653.5px;top:551.79px;font-size:11px;color:#9a99aa;font-weight:400;transform:scaleX(1.0);transform-origin:0 0;">-1</div>
<div class="t" style="left:912.7px;top:551.79px;font-size:11px;color:#9a99aa;font-weight:400;transform:scaleX(1.0);transform-origin:0 0;">$</div>
<div class="t" style="left:1042.3px;top:551.79px;font-size:11px;color:#9a99aa;font-weight:400;transform:scaleX(0.94);transform-origin:0 0;">0.00</div>
<div class="t" style="left:1171.8999999999999px;top:551.79px;font-size:11px;color:#9a99aa;font-weight:400;transform:scaleX(0.955);transform-origin:0 0;">Refer</div>
<div class="t" style="left:1301.5px;top:551.79px;font-size:11px;color:#9a99aa;font-weight:400;transform:scaleX(1.02);transform-origin:0 0;">testgg</div>
<div class="r" style="left:1431px;top:543.8px;width:30px;height:28px;background:#00aeff;border-radius:3px;"></div>
<svg style="left:1441px;top:551.4px" width="10.5" height="10.5" viewBox="0 0 10 10"><path d="M7 0.4 L9.6 3 L3.6 9 L0.4 9.6 L1 6.4Z" fill="#fff"/><path d="M5.9 1.5 L8.5 4.1" stroke="#00aeff" stroke-width="0.8"/></svg>
<div class="r" style="left:257px;top:579.62px;width:1296px;height:1px;background:#34355a;"></div>
<div class="t" style="left:264.7px;top:596.42px;font-size:11px;color:#9a99aa;font-weight:400;transform:scaleX(1.0);transform-origin:0 0;">186</div>
<div class="t" style="left:394.29999999999995px;top:596.42px;font-size:11px;color:#9a99aa;font-weight:400;transform:scaleX(0.937);transform-origin:0 0;">Refer57843947116</div>
<div class="t" style="left:523.9px;top:596.42px;font-size:11px;color:#9a99aa;font-weight:400;transform:scaleX(0.85);transform-origin:0 0;">DFKQJCBP</div>
<div class="t" style="left:653.5px;top:596.42px;font-size:11px;color:#9a99aa;font-weight:400;transform:scaleX(1.0);transform-origin:0 0;">-1</div>
<div class="t" style="left:912.7px;top:596.42px;font-size:11px;color:#9a99aa;font-weight:400;transform:scaleX(1.0);transform-origin:0 0;">$</div>
<div class="t" style="left:1042.3px;top:596.42px;font-size:11px;color:#9a99aa;font-weight:400;transform:scaleX(0.94);transform-origin:0 0;">0.00</div>
<div class="t" style="left:1171.8999999999999px;top:596.42px;font-size:11px;color:#9a99aa;font-weight:400;transform:scaleX(0.955);transform-origin:0 0;">Refer</div>
<div class="t" style="left:1301.5px;top:596.42px;font-size:11px;color:#9a99aa;font-weight:400;transform:scaleX(1.02);transform-origin:0 0;">test050606</div>
<div class="r" style="left:1431px;top:588.42px;width:30px;height:28px;background:#00aeff;border-radius:3px;"></div>
<svg style="left:1441px;top:596.02px" width="10.5" height="10.5" viewBox="0 0 10 10"><path d="M7 0.4 L9.6 3 L3.6 9 L0.4 9.6 L1 6.4Z" fill="#fff"/><path d="M5.9 1.5 L8.5 4.1" stroke="#00aeff" stroke-width="0.8"/></svg>
<div class="r" style="left:257px;top:624.25px;width:1296px;height:1px;background:#34355a;"></div>
<div class="t" style="left:264.7px;top:641.04px;font-size:11px;color:#9a99aa;font-weight:400;transform:scaleX(1.0);transform-origin:0 0;">184</div>
<div class="t" style="left:394.29999999999995px;top:641.04px;font-size:11px;color:#9a99aa;font-weight:400;transform:scaleX(0.937);transform-origin:0 0;">Refer57843947110</div>
<div class="t" style="left:523.9px;top:641.04px;font-size:11px;color:#9a99aa;font-weight:400;transform:scaleX(0.85);transform-origin:0 0;">RTGISSQY</div>
<div class="t" style="left:653.5px;top:641.04px;font-size:11px;color:#9a99aa;font-weight:400;transform:scaleX(1.0);transform-origin:0 0;">-1</div>
<div class="t" style="left:912.7px;top:641.04px;font-size:11px;color:#9a99aa;font-weight:400;transform:scaleX(1.0);transform-origin:0 0;">$</div>
<div class="t" style="left:1042.3px;top:641.04px;font-size:11px;color:#9a99aa;font-weight:400;transform:scaleX(0.94);transform-origin:0 0;">0.00</div>
<div class="t" style="left:1171.8999999999999px;top:641.04px;font-size:11px;color:#9a99aa;font-weight:400;transform:scaleX(0.955);transform-origin:0 0;">Refer</div>
<div class="t" style="left:1301.5px;top:641.04px;font-size:11px;color:#9a99aa;font-weight:400;transform:scaleX(1.02);transform-origin:0 0;">test06066</div>
<div class="r" style="left:1431px;top:633.05px;width:30px;height:28px;background:#00aeff;border-radius:3px;"></div>
<svg style="left:1441px;top:640.65px" width="10.5" height="10.5" viewBox="0 0 10 10"><path d="M7 0.4 L9.6 3 L3.6 9 L0.4 9.6 L1 6.4Z" fill="#fff"/><path d="M5.9 1.5 L8.5 4.1" stroke="#00aeff" stroke-width="0.8"/></svg>
<div class="r" style="left:257px;top:668.88px;width:1296px;height:1px;background:#34355a;"></div>
<div class="t" style="left:264.7px;top:685.67px;font-size:11px;color:#9a99aa;font-weight:400;transform:scaleX(1.0);transform-origin:0 0;">182</div>
<div class="t" style="left:394.29999999999995px;top:685.67px;font-size:11px;color:#9a99aa;font-weight:400;transform:scaleX(0.937);transform-origin:0 0;">Refer57843947108</div>
<div class="t" style="left:523.9px;top:685.67px;font-size:11px;color:#9a99aa;font-weight:400;transform:scaleX(0.85);transform-origin:0 0;">HGZFUDAG</div>
<div class="t" style="left:653.5px;top:685.67px;font-size:11px;color:#9a99aa;font-weight:400;transform:scaleX(1.0);transform-origin:0 0;">-1</div>
<div class="t" style="left:912.7px;top:685.67px;font-size:11px;color:#9a99aa;font-weight:400;transform:scaleX(1.0);transform-origin:0 0;">$</div>
<div class="t" style="left:1042.3px;top:685.67px;font-size:11px;color:#9a99aa;font-weight:400;transform:scaleX(0.94);transform-origin:0 0;">0.00</div>
<div class="t" style="left:1171.8999999999999px;top:685.67px;font-size:11px;color:#9a99aa;font-weight:400;transform:scaleX(0.955);transform-origin:0 0;">Refer</div>
<div class="t" style="left:1301.5px;top:685.67px;font-size:11px;color:#9a99aa;font-weight:400;transform:scaleX(1.02);transform-origin:0 0;">test060605</div>
<div class="r" style="left:1431px;top:677.67px;width:30px;height:28px;background:#00aeff;border-radius:3px;"></div>
<svg style="left:1441px;top:685.27px" width="10.5" height="10.5" viewBox="0 0 10 10"><path d="M7 0.4 L9.6 3 L3.6 9 L0.4 9.6 L1 6.4Z" fill="#fff"/><path d="M5.9 1.5 L8.5 4.1" stroke="#00aeff" stroke-width="0.8"/></svg>
<div class="r" style="left:257px;top:713.5px;width:1296px;height:1px;background:#34355a;"></div>
<div class="t" style="left:264.7px;top:730.29px;font-size:11px;color:#9a99aa;font-weight:400;transform:scaleX(1.0);transform-origin:0 0;">180</div>
<div class="t" style="left:394.29999999999995px;top:730.29px;font-size:11px;color:#9a99aa;font-weight:400;transform:scaleX(0.937);transform-origin:0 0;">Refer57843947106</div>
<div class="t" style="left:523.9px;top:730.29px;font-size:11px;color:#9a99aa;font-weight:400;transform:scaleX(0.85);transform-origin:0 0;">CSXMKLIB</div>
<div class="t" style="left:653.5px;top:730.29px;font-size:11px;color:#9a99aa;font-weight:400;transform:scaleX(1.0);transform-origin:0 0;">-1</div>
<div class="t" style="left:912.7px;top:730.29px;font-size:11px;color:#9a99aa;font-weight:400;transform:scaleX(1.0);transform-origin:0 0;">$</div>
<div class="t" style="left:1042.3px;top:730.29px;font-size:11px;color:#9a99aa;font-weight:400;transform:scaleX(0.94);transform-origin:0 0;">0.00</div>
<div class="t" style="left:1171.8999999999999px;top:730.29px;font-size:11px;color:#9a99aa;font-weight:400;transform:scaleX(0.955);transform-origin:0 0;">Refer</div>
<div class="t" style="left:1301.5px;top:730.29px;font-size:11px;color:#9a99aa;font-weight:400;transform:scaleX(1.02);transform-origin:0 0;">test060604</div>
<div class="r" style="left:1431px;top:722.3px;width:30px;height:28px;background:#00aeff;border-radius:3px;"></div>
<svg style="left:1441px;top:729.9px" width="10.5" height="10.5" viewBox="0 0 10 10"><path d="M7 0.4 L9.6 3 L3.6 9 L0.4 9.6 L1 6.4Z" fill="#fff"/><path d="M5.9 1.5 L8.5 4.1" stroke="#00aeff" stroke-width="0.8"/></svg>
<div class="r" style="left:257px;top:758.12px;width:1296px;height:1px;background:#34355a;"></div>
<div class="t" style="left:264.7px;top:774.92px;font-size:11px;color:#9a99aa;font-weight:400;transform:scaleX(1.0);transform-origin:0 0;">178</div>
<div class="t" style="left:394.29999999999995px;top:774.92px;font-size:11px;color:#9a99aa;font-weight:400;transform:scaleX(0.937);transform-origin:0 0;">Refer57843947104</div>
<div class="t" style="left:523.9px;top:774.92px;font-size:11px;color:#9a99aa;font-weight:400;transform:scaleX(0.85);transform-origin:0 0;">RWEOTRWR</div>
<div class="t" style="left:653.5px;top:774.92px;font-size:11px;color:#9a99aa;font-weight:400;transform:scaleX(1.0);transform-origin:0 0;">-1</div>
<div class="t" style="left:912.7px;top:774.92px;font-size:11px;color:#9a99aa;font-weight:400;transform:scaleX(1.0);transform-origin:0 0;">$</div>
<div class="t" style="left:1042.3px;top:774.92px;font-size:11px;color:#9a99aa;font-weight:400;transform:scaleX(0.94);transform-origin:0 0;">0.00</div>
<div class="t" style="left:1171.8999999999999px;top:774.92px;font-size:11px;color:#9a99aa;font-weight:400;transform:scaleX(0.955);transform-origin:0 0;">Refer</div>
<div class="t" style="left:1301.5px;top:774.92px;font-size:11px;color:#9a99aa;font-weight:400;transform:scaleX(1.02);transform-origin:0 0;">test06063</div>
<div class="r" style="left:1431px;top:766.92px;width:30px;height:28px;background:#00aeff;border-radius:3px;"></div>
<svg style="left:1441px;top:774.52px" width="10.5" height="10.5" viewBox="0 0 10 10"><path d="M7 0.4 L9.6 3 L3.6 9 L0.4 9.6 L1 6.4Z" fill="#fff"/><path d="M5.9 1.5 L8.5 4.1" stroke="#00aeff" stroke-width="0.8"/></svg>
<div class="r" style="left:257px;top:802.75px;width:1296px;height:1px;background:#34355a;"></div>
<div class="t" style="left:264.7px;top:819.54px;font-size:11px;color:#9a99aa;font-weight:400;transform:scaleX(1.0);transform-origin:0 0;">176</div>
<div class="t" style="left:394.29999999999995px;top:819.54px;font-size:11px;color:#9a99aa;font-weight:400;transform:scaleX(0.937);transform-origin:0 0;">Refer57843947102</div>
<div class="t" style="left:523.9px;top:819.54px;font-size:11px;color:#9a99aa;font-weight:400;transform:scaleX(0.85);transform-origin:0 0;">UKKFYJLJ</div>
<div class="t" style="left:653.5px;top:819.54px;font-size:11px;color:#9a99aa;font-weight:400;transform:scaleX(1.0);transform-origin:0 0;">-1</div>
<div class="t" style="left:912.7px;top:819.54px;font-size:11px;color:#9a99aa;font-weight:400;transform:scaleX(1.0);transform-origin:0 0;">$</div>
<div class="t" style="left:1042.3px;top:819.54px;font-size:11px;color:#9a99aa;font-weight:400;transform:scaleX(0.94);transform-origin:0 0;">0.00</div>
<div class="t" style="left:1171.8999999999999px;top:819.54px;font-size:11px;color:#9a99aa;font-weight:400;transform:scaleX(0.955);transform-origin:0 0;">Refer</div>
<div class="t" style="left:1301.5px;top:819.54px;font-size:11px;color:#9a99aa;font-weight:400;transform:scaleX(1.02);transform-origin:0 0;">test06062</div>
<div class="r" style="left:1431px;top:811.55px;width:30px;height:28px;background:#00aeff;border-radius:3px;"></div>
<svg style="left:1441px;top:819.15px" width="10.5" height="10.5" viewBox="0 0 10 10"><path d="M7 0.4 L9.6 3 L3.6 9 L0.4 9.6 L1 6.4Z" fill="#fff"/><path d="M5.9 1.5 L8.5 4.1" stroke="#00aeff" stroke-width="0.8"/></svg>
<div class="r" style="left:257px;top:847.38px;width:1296px;height:1px;background:#34355a;"></div>
<div class="t" style="left:264.7px;top:864.17px;font-size:11px;color:#9a99aa;font-weight:400;transform:scaleX(1.0);transform-origin:0 0;">174</div>
<div class="t" style="left:394.29999999999995px;top:864.17px;font-size:11px;color:#9a99aa;font-weight:400;transform:scaleX(0.937);transform-origin:0 0;">Refer57843947100</div>
<div class="t" style="left:523.9px;top:864.17px;font-size:11px;color:#9a99aa;font-weight:400;transform:scaleX(0.85);transform-origin:0 0;">JJTPLCYU</div>
<div class="t" style="left:653.5px;top:864.17px;font-size:11px;color:#9a99aa;font-weight:400;transform:scaleX(1.0);transform-origin:0 0;">-1</div>
<div class="t" style="left:912.7px;top:864.17px;font-size:11px;color:#9a99aa;font-weight:400;transform:scaleX(1.0);transform-origin:0 0;">$</div>
<div class="t" style="left:1042.3px;top:864.17px;font-size:11px;color:#9a99aa;font-weight:400;transform:scaleX(0.94);transform-origin:0 0;">0.00</div>
<div class="t" style="left:1171.8999999999999px;top:864.17px;font-size:11px;color:#9a99aa;font-weight:400;transform:scaleX(0.955);transform-origin:0 0;">Refer</div>
<div class="t" style="left:1301.5px;top:864.17px;font-size:11px;color:#9a99aa;font-weight:400;transform:scaleX(1.02);transform-origin:0 0;">test0606</div>
<div class="r" style="left:1431px;top:856.17px;width:30px;height:28px;background:#00aeff;border-radius:3px;"></div>
<svg style="left:1441px;top:863.77px" width="10.5" height="10.5" viewBox="0 0 10 10"><path d="M7 0.4 L9.6 3 L3.6 9 L0.4 9.6 L1 6.4Z" fill="#fff"/><path d="M5.9 1.5 L8.5 4.1" stroke="#00aeff" stroke-width="0.8"/></svg>
<div class="r" style="left:257px;top:892.0px;width:1296px;height:1px;background:#34355a;"></div>
<div class="t" style="left:264.7px;top:908.79px;font-size:11px;color:#9a99aa;font-weight:400;transform:scaleX(1.0);transform-origin:0 0;">172</div>
<div class="t" style="left:394.29999999999995px;top:908.79px;font-size:11px;color:#9a99aa;font-weight:400;transform:scaleX(0.937);transform-origin:0 0;">Refer57843947098</div>
<div class="t" style="left:523.9px;top:908.79px;font-size:11px;color:#9a99aa;font-weight:400;transform:scaleX(0.85);transform-origin:0 0;">XPIRHWPS</div>
<div class="t" style="left:653.5px;top:908.79px;font-size:11px;color:#9a99aa;font-weight:400;transform:scaleX(1.0);transform-origin:0 0;">-1</div>
<div class="t" style="left:912.7px;top:908.79px;font-size:11px;color:#9a99aa;font-weight:400;transform:scaleX(1.0);transform-origin:0 0;">$</div>
<div class="t" style="left:1042.3px;top:908.79px;font-size:11px;color:#9a99aa;font-weight:400;transform:scaleX(0.94);transform-origin:0 0;">0.00</div>
<div class="t" style="left:1171.8999999999999px;top:908.79px;font-size:11px;color:#9a99aa;font-weight:400;transform:scaleX(0.955);transform-origin:0 0;">Refer</div>
<div class="t" style="left:1301.5px;top:908.79px;font-size:11px;color:#9a99aa;font-weight:400;transform:scaleX(1.02);transform-origin:0 0;">test0605</div>
<div class="r" style="left:1431px;top:900.8px;width:30px;height:28px;background:#00aeff;border-radius:3px;"></div>
<svg style="left:1441px;top:908.4px" width="10.5" height="10.5" viewBox="0 0 10 10"><path d="M7 0.4 L9.6 3 L3.6 9 L0.4 9.6 L1 6.4Z" fill="#fff"/><path d="M5.9 1.5 L8.5 4.1" stroke="#00aeff" stroke-width="0.8"/></svg>
<div class="r" style="left:257px;top:936.62px;width:1296px;height:1px;background:#34355a;"></div>
<div class="t" style="left:264.7px;top:953.42px;font-size:11px;color:#9a99aa;font-weight:400;transform:scaleX(1.0);transform-origin:0 0;">170</div>
<div class="t" style="left:394.29999999999995px;top:953.42px;font-size:11px;color:#9a99aa;font-weight:400;transform:scaleX(0.937);transform-origin:0 0;">Refer57843947088</div>
<div class="t" style="left:523.9px;top:953.42px;font-size:11px;color:#9a99aa;font-weight:400;transform:scaleX(0.85);transform-origin:0 0;">ZLYPZVXI</div>
<div class="t" style="left:653.5px;top:953.42px;font-size:11px;color:#9a99aa;font-weight:400;transform:scaleX(1.0);transform-origin:0 0;">-1</div>
<div class="t" style="left:912.7px;top:953.42px;font-size:11px;color:#9a99aa;font-weight:400;transform:scaleX(1.0);transform-origin:0 0;">$</div>
<div class="t" style="left:1042.3px;top:953.42px;font-size:11px;color:#9a99aa;font-weight:400;transform:scaleX(0.94);transform-origin:0 0;">0.00</div>
<div class="t" style="left:1171.8999999999999px;top:953.42px;font-size:11px;color:#9a99aa;font-weight:400;transform:scaleX(0.955);transform-origin:0 0;">Refer</div>
<div class="t" style="left:1301.5px;top:953.42px;font-size:11px;color:#9a99aa;font-weight:400;transform:scaleX(1.02);transform-origin:0 0;">qwerqt</div>
<div class="r" style="left:1431px;top:945.42px;width:30px;height:28px;background:#00aeff;border-radius:3px;"></div>
<svg style="left:1441px;top:953.02px" width="10.5" height="10.5" viewBox="0 0 10 10"><path d="M7 0.4 L9.6 3 L3.6 9 L0.4 9.6 L1 6.4Z" fill="#fff"/><path d="M5.9 1.5 L8.5 4.1" stroke="#00aeff" stroke-width="0.8"/></svg>
<div class="r" style="left:259px;top:354px;width:1304px;height:49px;background:transparent;box-sizing:border-box;border:2px solid #e8413f;"></div>
<svg style="left:1899px;top:868px" width="42" height="42" viewBox="0 0 42 42"><circle cx="21" cy="21" r="20.2" fill="#000" stroke="#3c8aa0" stroke-width="0.9"/><path d="M20.5 15 L14.5 21 L20.5 27" fill="none" stroke="#a8a8a8" stroke-width="2.6"/></svg>
<svg style="left:1865px;top:270px" width="12" height="20" viewBox="0 0 12 20"><path d="M0.5 0.5 V16 L4 12.6 L6.5 18.5 L8.8 17.5 L6.4 11.8 H11.2Z" fill="#fff" stroke="#000" stroke-width="1"/></svg>
</body></html>
